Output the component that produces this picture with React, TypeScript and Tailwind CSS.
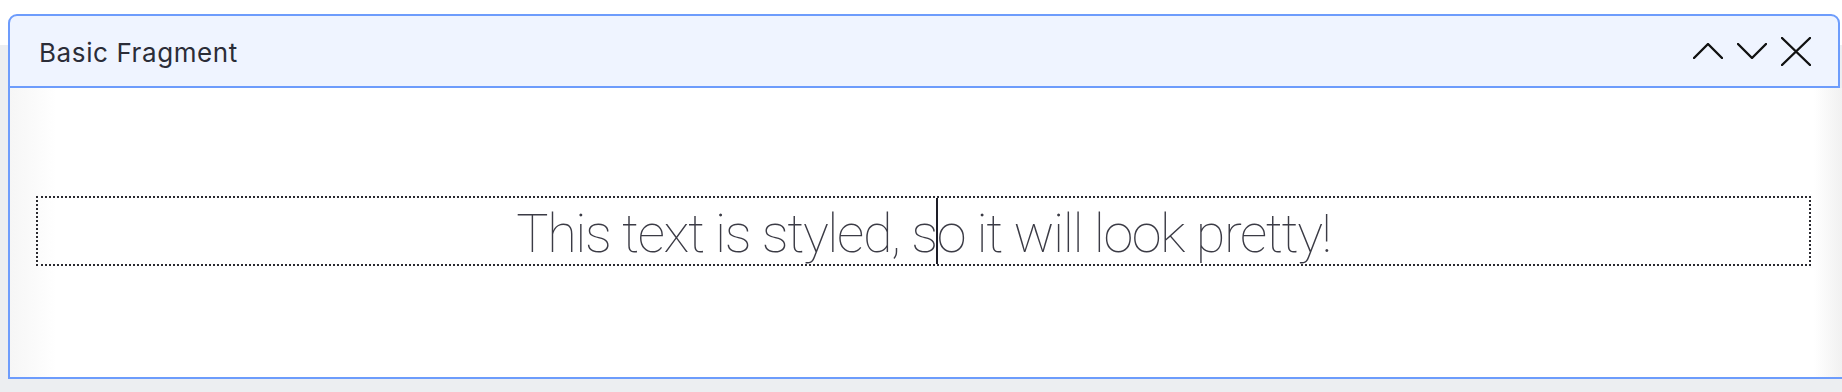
import React from "react";

function ChevronUp() {
  return (
    <svg width="30" height="16" viewBox="0 0 30 16" fill="none">
      <polyline
        points="1,15 15,1 29,15"
        stroke="#111"
        strokeWidth="2.4"
        strokeLinecap="round"
        strokeLinejoin="round"
      />
    </svg>
  );
}

function ChevronDown() {
  return (
    <svg width="30" height="16" viewBox="0 0 30 16" fill="none">
      <polyline
        points="1,1 15,15 29,1"
        stroke="#111"
        strokeWidth="2.4"
        strokeLinecap="round"
        strokeLinejoin="round"
      />
    </svg>
  );
}

function CloseIcon() {
  return (
    <svg width="30" height="29" viewBox="0 0 30 29" fill="none">
      <path
        d="M1 1 L29 28 M29 1 L1 28"
        stroke="#111"
        strokeWidth="2.4"
        strokeLinecap="round"
      />
    </svg>
  );
}

export default function App() {
  return (
    <div className="w-[1842px] h-[392px] overflow-hidden bg-[linear-gradient(to_bottom,#ffffff_0,#ffffff_45px,#eceef1_45px)] pt-[14px] pl-[8px]">
      <div className="flex flex-col h-[365px]">
        {/* header */}
        <div className="mr-[2px] h-[74px] flex-shrink-0 flex items-center justify-between rounded-t-[9px] border-2 border-[#6d9cfc] bg-[#eff4ff] pl-[29px] pr-[27px]">
          <span className="pt-[2px] text-[26px] text-[#2b2d38] font-['Inter',sans-serif] tracking-[0.6px]">
            Basic Fragment
          </span>
          <div className="flex items-center gap-[14px]">
            <button className="flex items-center">
              <ChevronUp />
            </button>
            <button className="flex items-center">
              <ChevronDown />
            </button>
            <button className="flex items-center">
              <CloseIcon />
            </button>
          </div>
        </div>

        {/* body */}
        <div className="flex-1 border-l-2 border-b-2 border-[#6d9cfc] bg-[linear-gradient(to_right,#f6f6f6,#ffffff_46px,#ffffff_calc(100%-28px),#f1f1f1)] pl-[26px] pr-[31px] pt-[108px]">
          <div className="h-[70px] border-2 border-dotted border-[#2a2a30] flex items-stretch justify-center font-['Roboto',sans-serif] font-thin text-[54px] leading-none tracking-[-1.4px] text-[#3b3b45]">
            <span className="flex items-center pt-[6px] whitespace-pre">This text is styled, s</span>
            <div className="w-[2px] -mx-px bg-[#1e1e28]" />
            <span className="flex items-center pt-[6px] whitespace-pre">o it will look pretty!</span>
          </div>
        </div>
      </div>
    </div>
  );
}
